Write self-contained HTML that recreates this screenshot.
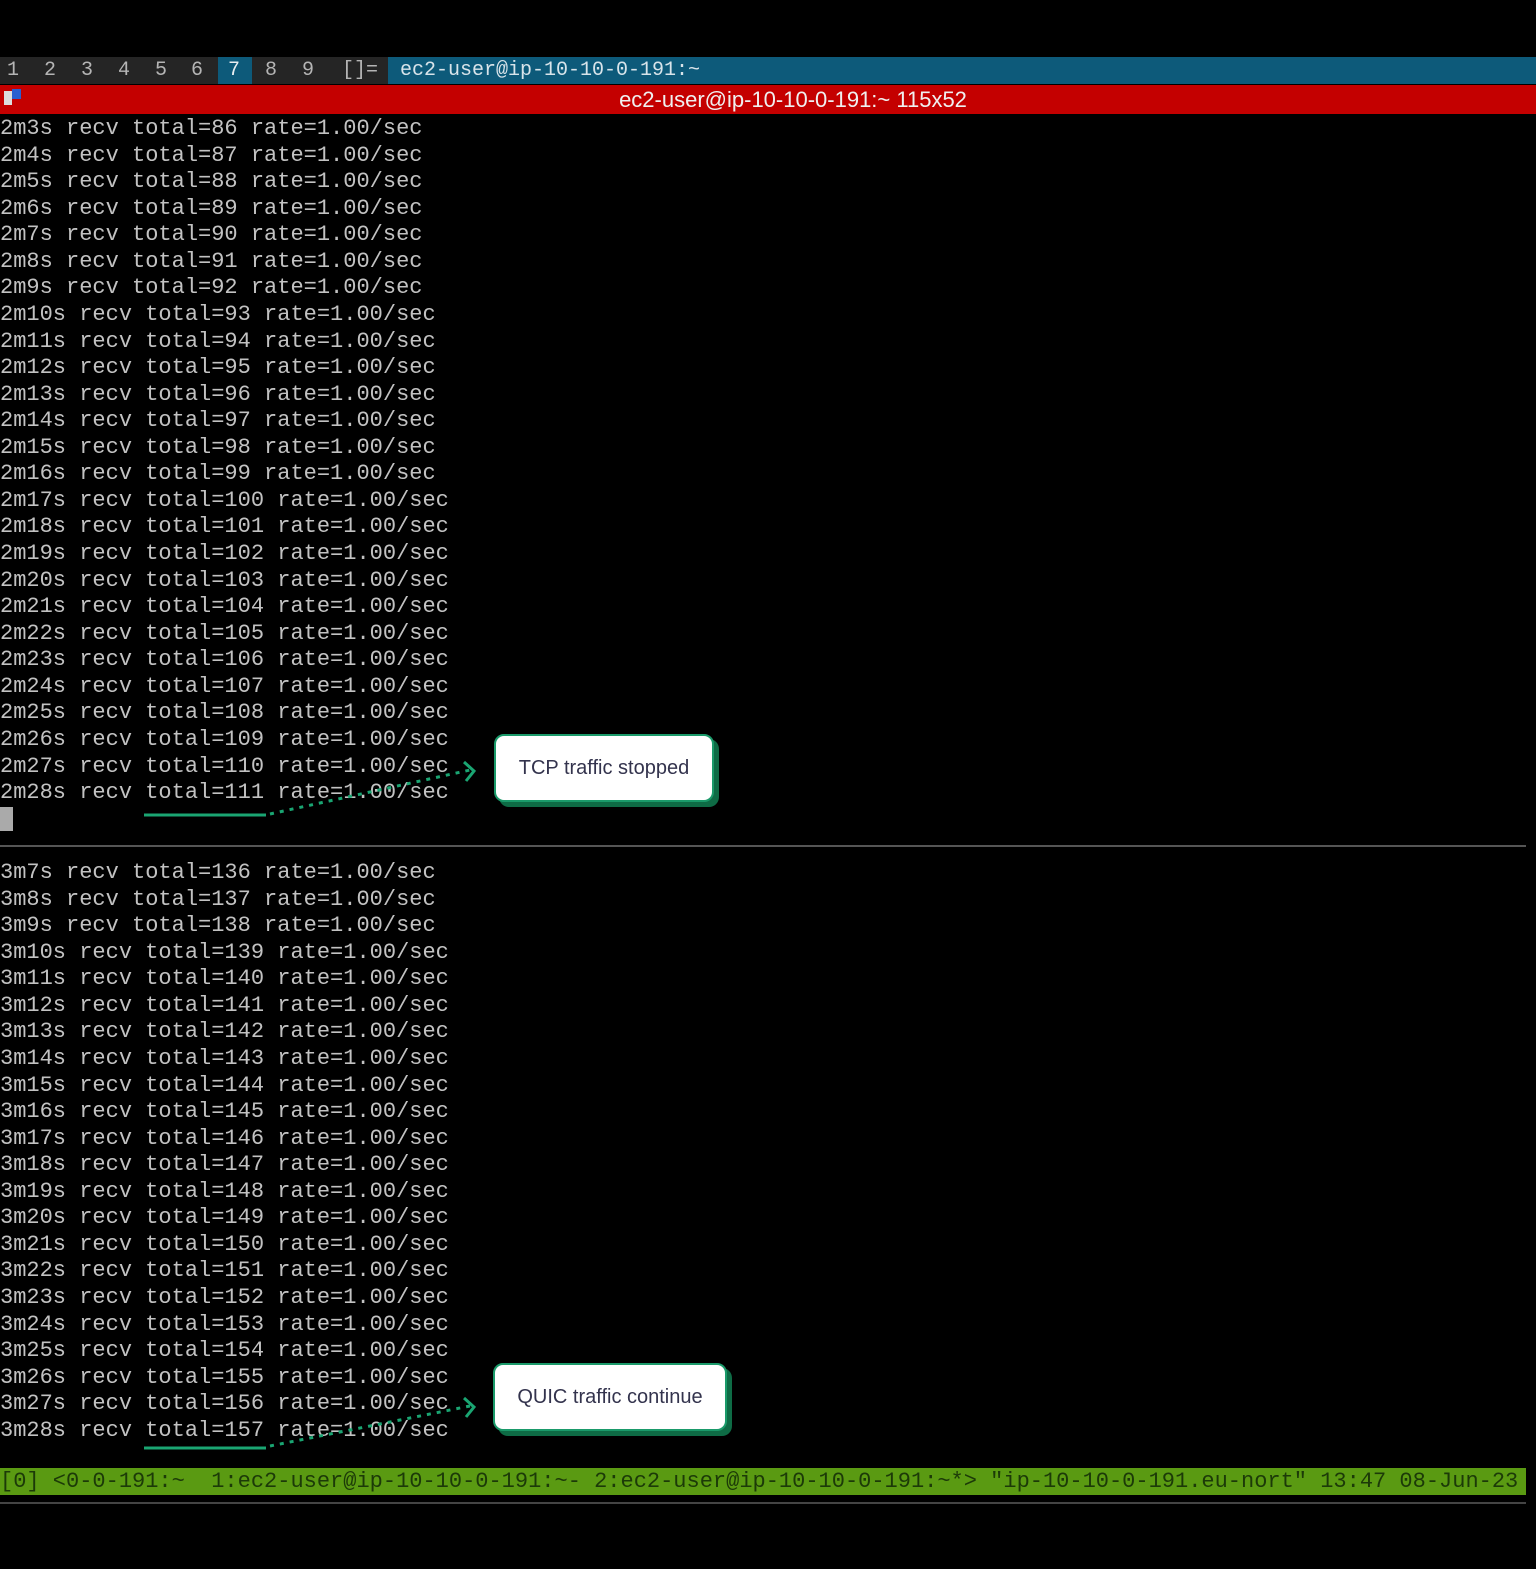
<!DOCTYPE html>
<html><head><meta charset="utf-8"><style>
body{margin:0;width:1536px;height:1569px;background:#000;overflow:hidden;position:relative;font-family:"Liberation Mono",monospace;}
.t{position:absolute;left:0;font-size:22px;line-height:26.57px;color:#c2c2c2;white-space:pre;}
.bar{position:absolute;left:0;width:1536px;}
.callout{position:absolute;background:#fff;border-radius:10px;box-shadow:5px 5px 0 #0e6b45;border:2px solid #1a9a6a;font-family:"Liberation Sans",sans-serif;font-size:20px;color:#33334d;display:flex;align-items:center;justify-content:center;}
.tab{position:absolute;top:57px;font-size:20px;line-height:27px;color:#b5b5b5;}
</style></head><body>
<div class="bar" style="top:57px;height:27px;background:#252525"></div>
<div style="position:absolute;left:388px;top:57px;width:1148px;height:27px;background:#0d5a7a"></div>
<div style="position:absolute;left:218px;top:57px;width:34px;height:27px;background:#0d5a7a"></div>
<div class="tab" style="left:7px">1</div><div class="tab" style="left:44px">2</div><div class="tab" style="left:81px">3</div><div class="tab" style="left:118px">4</div><div class="tab" style="left:155px">5</div><div class="tab" style="left:191px">6</div><div class="tab" style="left:228px;color:#e8eef2">7</div><div class="tab" style="left:265px">8</div><div class="tab" style="left:302px">9</div><div class="tab" style="left:342px">[]=</div>
<div class="tab" style="left:400px;color:#d8e4ea">ec2-user@ip-10-10-0-191:~</div>
<div class="bar" style="top:85px;height:29px;background:#c40000"></div>
<div style="position:absolute;left:4px;top:91px;width:8px;height:14px;background:#ddd"></div>
<div style="position:absolute;left:12px;top:89px;width:9px;height:10px;background:#2a5fd0"></div>
<div style="position:absolute;left:0;width:1586px;top:86px;text-align:center;color:#f0f0f0;font-family:'Liberation Sans',sans-serif;font-size:22px;line-height:27px">ec2-user@ip-10-10-0-191:~ 115x52</div>
<div class="t" style="top:116px">2m3s recv total=86 rate=1.00/sec
2m4s recv total=87 rate=1.00/sec
2m5s recv total=88 rate=1.00/sec
2m6s recv total=89 rate=1.00/sec
2m7s recv total=90 rate=1.00/sec
2m8s recv total=91 rate=1.00/sec
2m9s recv total=92 rate=1.00/sec
2m10s recv total=93 rate=1.00/sec
2m11s recv total=94 rate=1.00/sec
2m12s recv total=95 rate=1.00/sec
2m13s recv total=96 rate=1.00/sec
2m14s recv total=97 rate=1.00/sec
2m15s recv total=98 rate=1.00/sec
2m16s recv total=99 rate=1.00/sec
2m17s recv total=100 rate=1.00/sec
2m18s recv total=101 rate=1.00/sec
2m19s recv total=102 rate=1.00/sec
2m20s recv total=103 rate=1.00/sec
2m21s recv total=104 rate=1.00/sec
2m22s recv total=105 rate=1.00/sec
2m23s recv total=106 rate=1.00/sec
2m24s recv total=107 rate=1.00/sec
2m25s recv total=108 rate=1.00/sec
2m26s recv total=109 rate=1.00/sec
2m27s recv total=110 rate=1.00/sec
2m28s recv total=111 rate=1.00/sec</div>
<div style="position:absolute;left:0;top:807px;width:13px;height:24px;background:#aaa"></div>
<div style="position:absolute;left:0;top:845px;width:1526px;height:2px;background:#555"></div>
<div class="t" style="top:860px">3m7s recv total=136 rate=1.00/sec
3m8s recv total=137 rate=1.00/sec
3m9s recv total=138 rate=1.00/sec
3m10s recv total=139 rate=1.00/sec
3m11s recv total=140 rate=1.00/sec
3m12s recv total=141 rate=1.00/sec
3m13s recv total=142 rate=1.00/sec
3m14s recv total=143 rate=1.00/sec
3m15s recv total=144 rate=1.00/sec
3m16s recv total=145 rate=1.00/sec
3m17s recv total=146 rate=1.00/sec
3m18s recv total=147 rate=1.00/sec
3m19s recv total=148 rate=1.00/sec
3m20s recv total=149 rate=1.00/sec
3m21s recv total=150 rate=1.00/sec
3m22s recv total=151 rate=1.00/sec
3m23s recv total=152 rate=1.00/sec
3m24s recv total=153 rate=1.00/sec
3m25s recv total=154 rate=1.00/sec
3m26s recv total=155 rate=1.00/sec
3m27s recv total=156 rate=1.00/sec
3m28s recv total=157 rate=1.00/sec</div>
<svg style="position:absolute;left:0;top:0" width="1536" height="1569">
<g stroke="#1aa572" stroke-width="3" fill="none">
<line x1="144" y1="815" x2="266" y2="815"/>
<path d="M270 814 L470 770" stroke-dasharray="4 6"/>
<path d="M464 762 L474 771 L466 781"/>
<line x1="144" y1="1448" x2="266" y2="1448"/>
<path d="M270 1446 L470 1406" stroke-dasharray="4 6"/>
<path d="M464 1398 L474 1407 L466 1417"/>
</g></svg>
<div class="callout" style="left:494px;top:734px;width:216px;height:64px">TCP traffic stopped</div>
<div class="callout" style="left:493px;top:1363px;width:230px;height:64px">QUIC traffic continue</div>
<div style="position:absolute;left:0;top:1468px;height:27px;width:1526px;background:#5a9a12;overflow:hidden">
<div class="t" style="top:0;font-size:22px;line-height:27px;color:#1c3a08;letter-spacing:0">[0] &lt;0-0-191:~  1:ec2-user@ip-10-10-0-191:~- 2:ec2-user@ip-10-10-0-191:~*&gt; "ip-10-10-0-191.eu-nort" 13:47 08-Jun-23</div>
</div>
<div style="position:absolute;left:0;top:1502px;width:1526px;height:2px;background:#444"></div>
</body></html>
